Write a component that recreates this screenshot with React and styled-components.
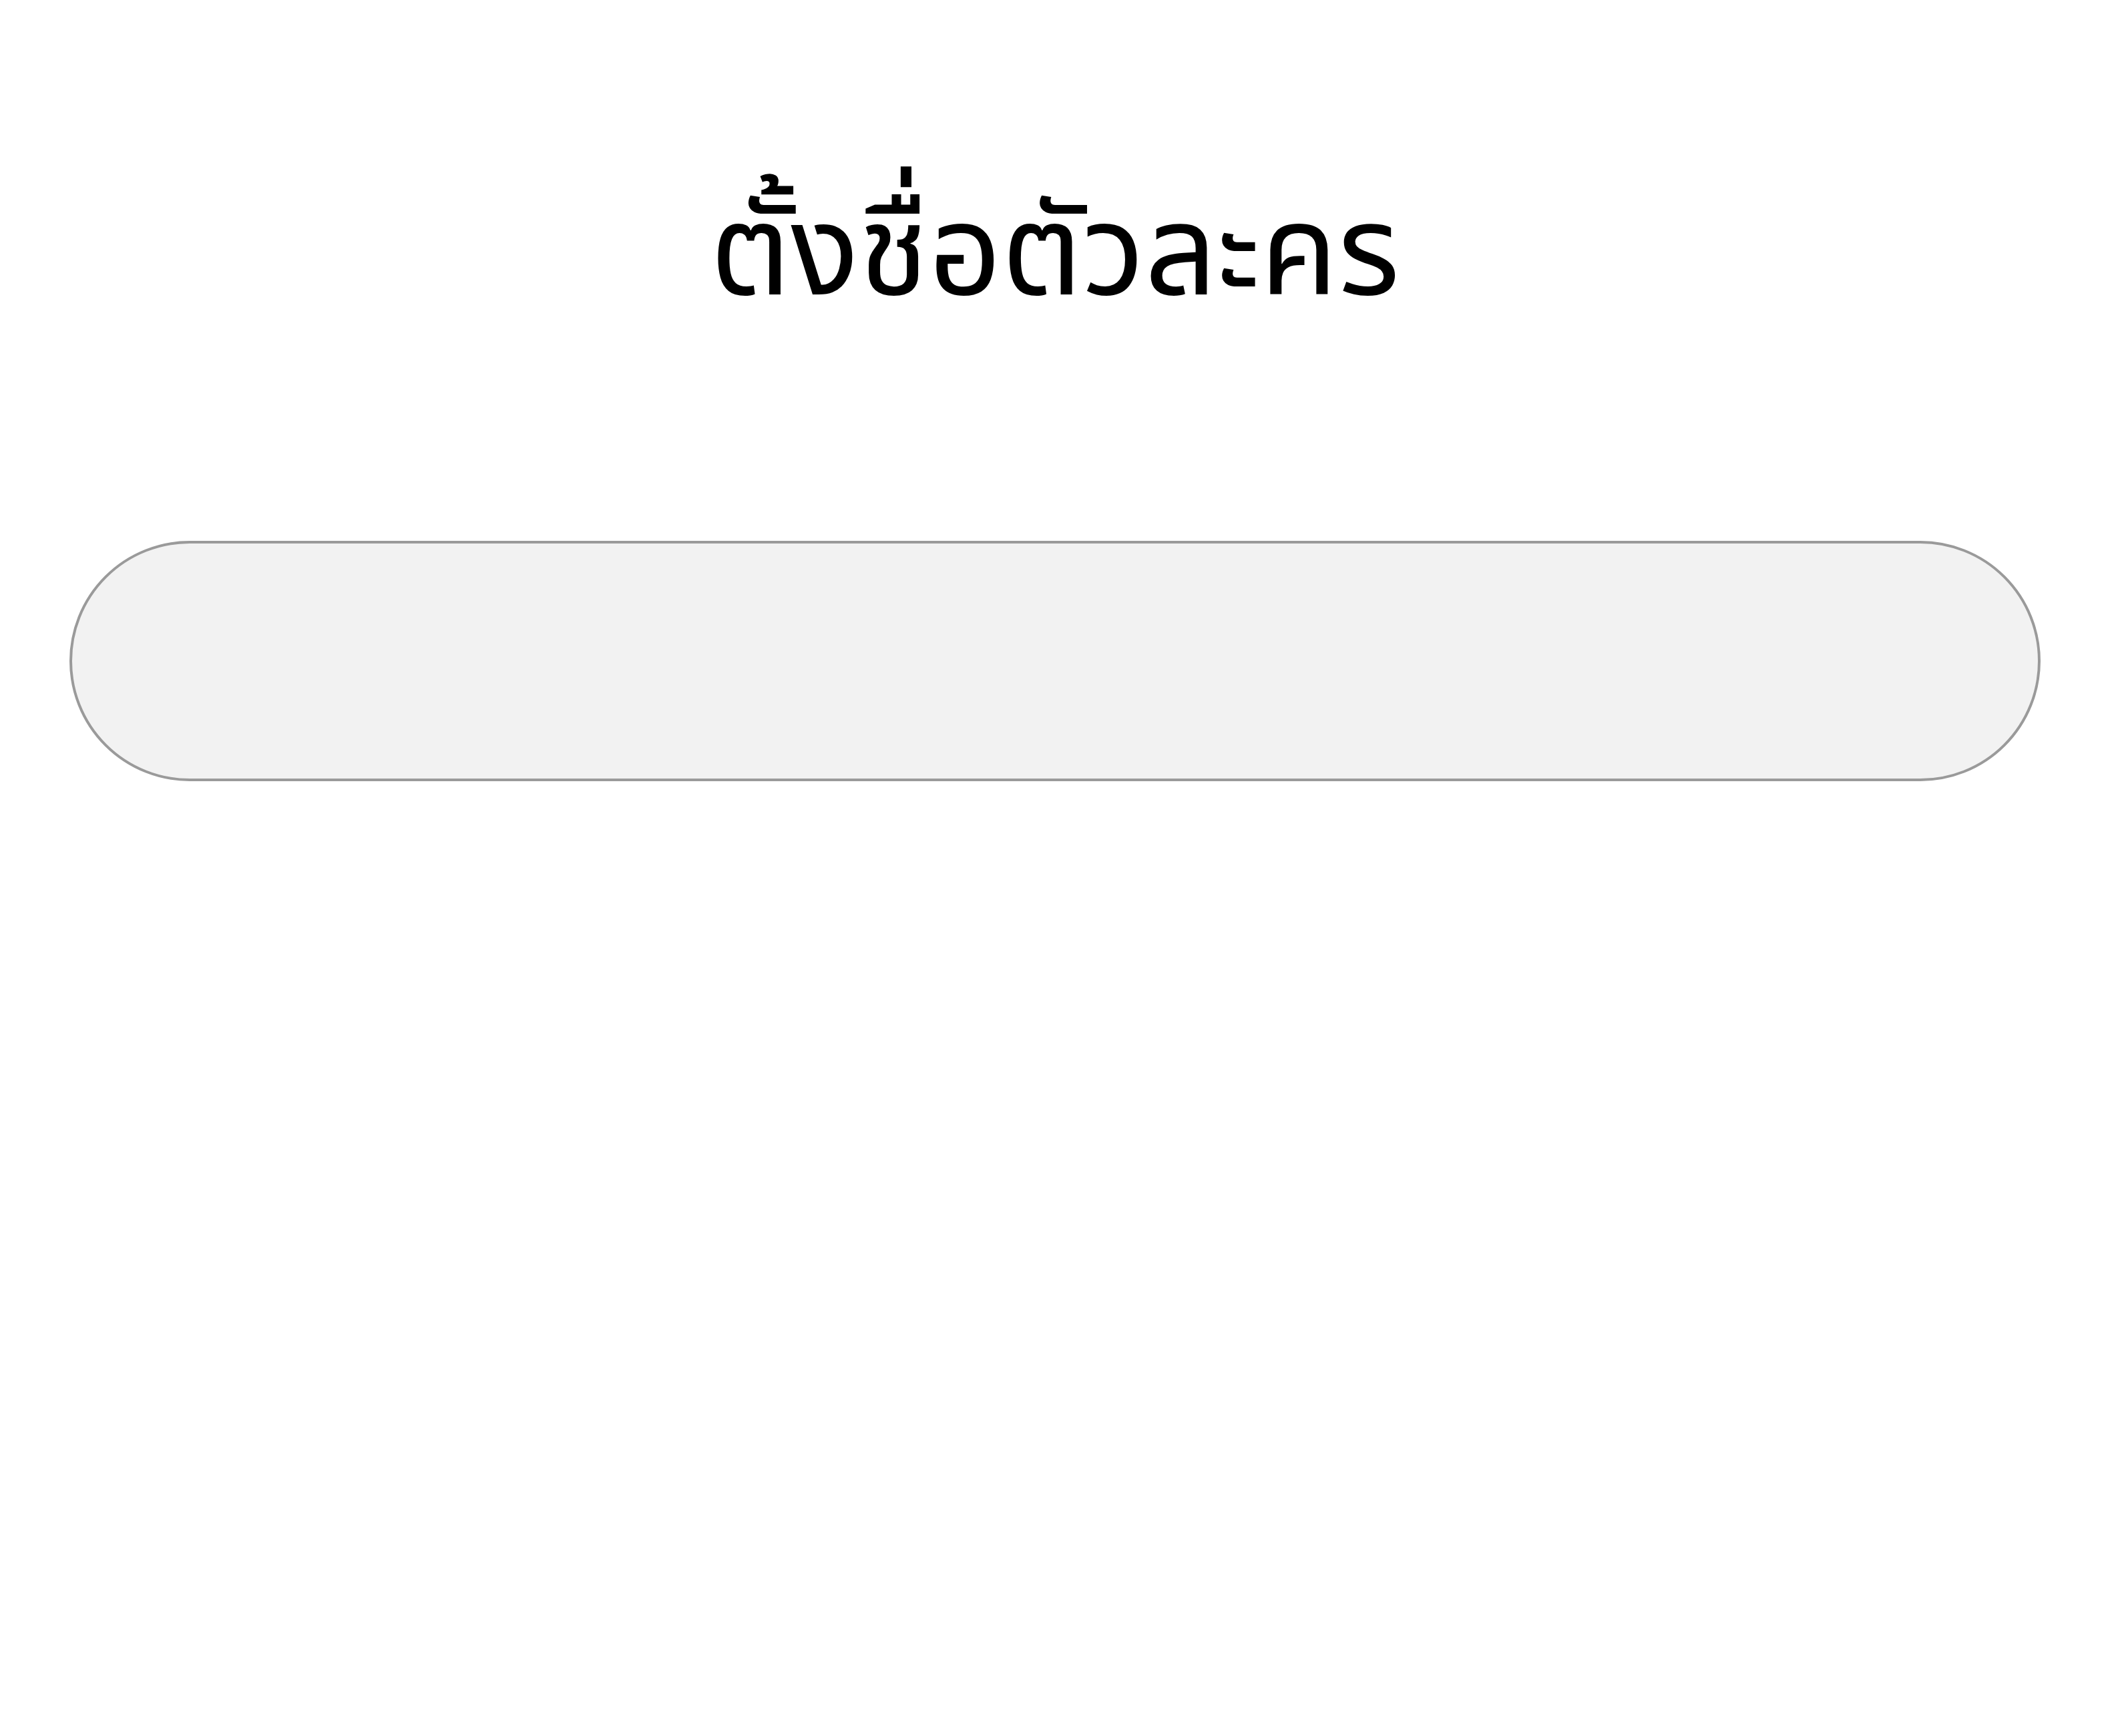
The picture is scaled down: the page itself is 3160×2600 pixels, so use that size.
import React from 'react';
import styled, {createGlobalStyle} from 'styled-components'

const Global = createGlobalStyle`
    body {
        margin: 0;
        background: #fff;
        font-family: "Noto Sans", "Noto Sans Thai", "DejaVu Sans", sans-serif;
    }
`

const Page = styled.div`
    display: flex;
    flex-direction: column;
    align-items: center;
    padding: 0 104px;
`
const Title = styled.h1`
    margin: 254px 0 0;
    font-size: 190px;
    font-weight: 400;
    line-height: 1.2;
    color: #000;
`
const NameInput = styled.input`
    box-sizing: border-box;
    width: 100%;
    height: 360px;
    margin-top: 328px;
    border: 4px solid #9a9a9a;
    border-radius: 180px;
    background: #f2f2f2;
    font-size: 120px;
    padding: 0 120px;
    outline: none;
`

export default function App(){
    return (
        <>
            <Global/>
            <Page>
                <Title>ตั้งชื่อตัวละคร</Title>
                <NameInput type="text"/>
            </Page>
        </>
    );
};
